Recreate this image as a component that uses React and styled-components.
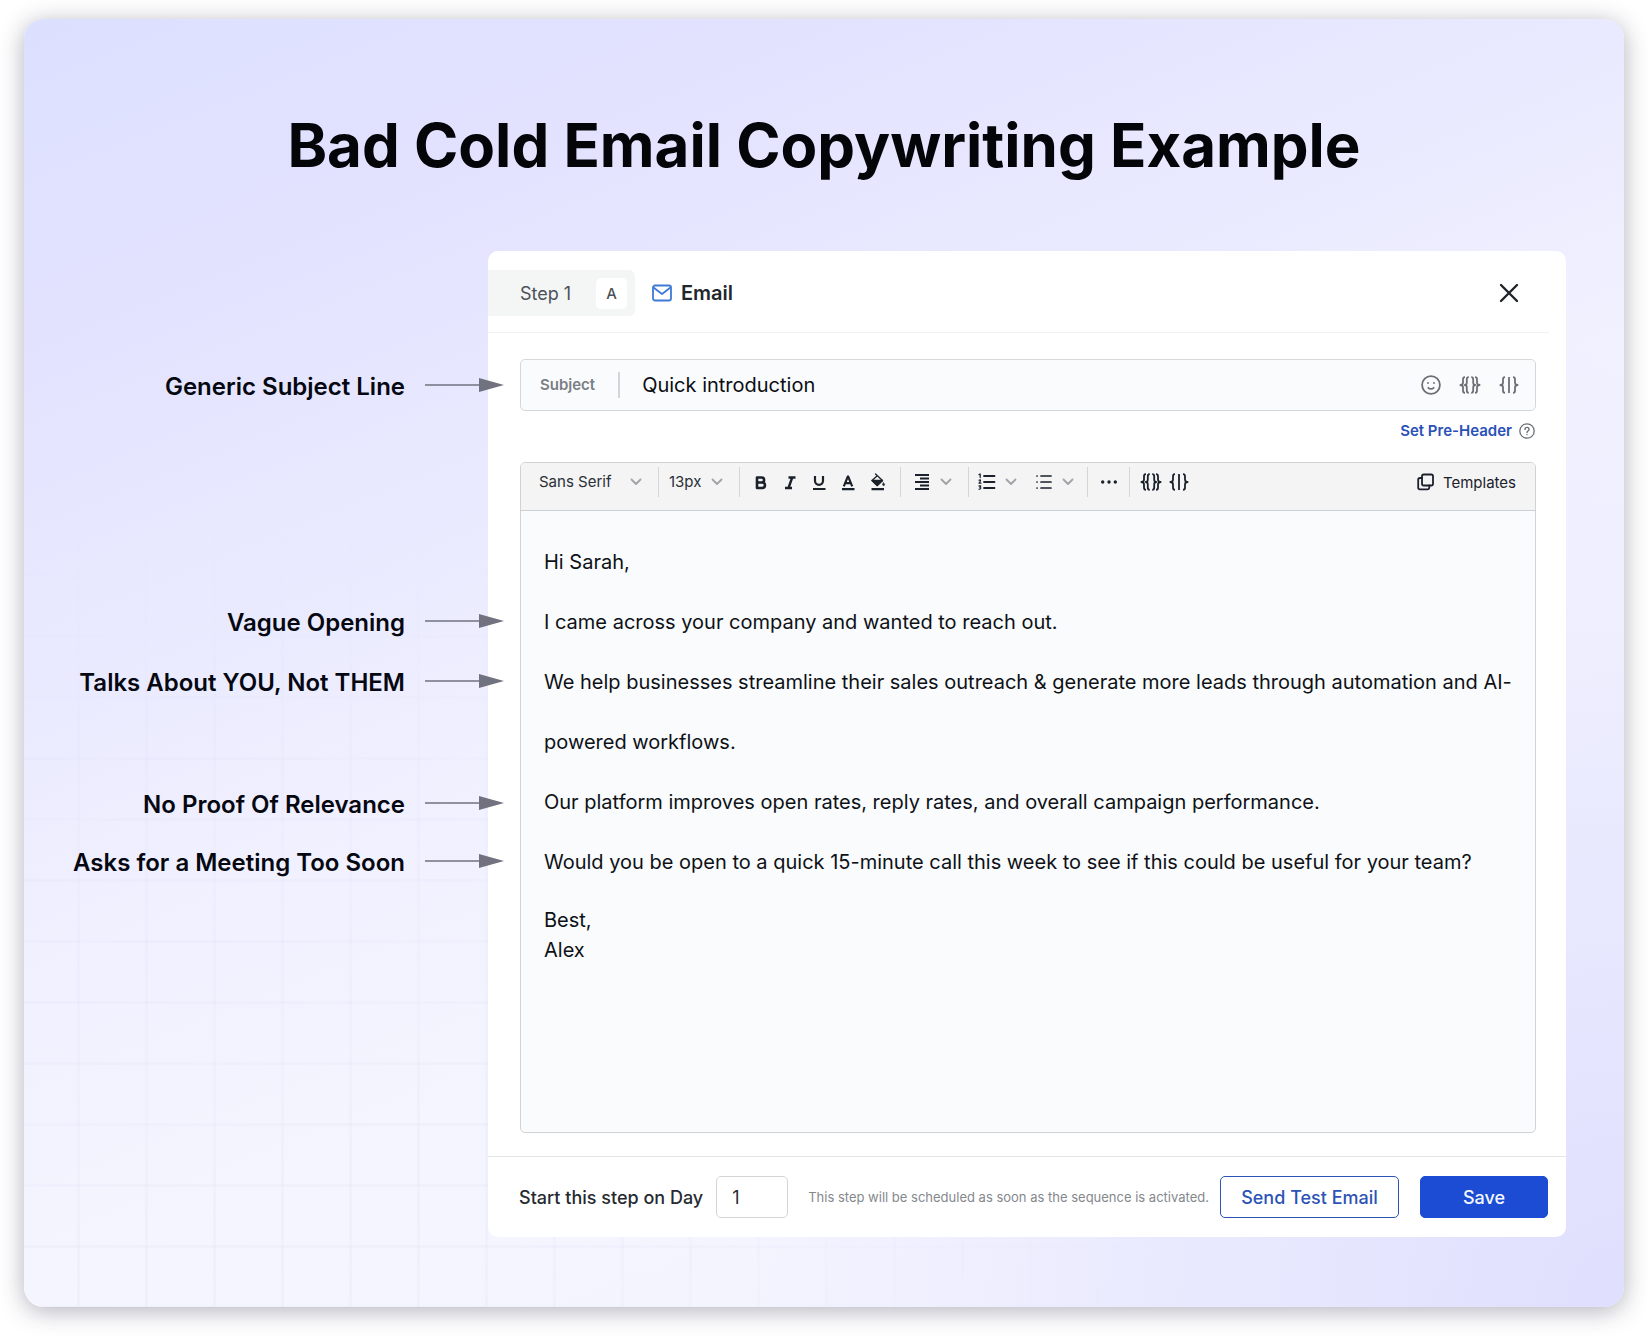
import React from "react";
import styled, { createGlobalStyle, css } from "styled-components";

const GlobalStyle = createGlobalStyle`
  *, *::before, *::after { box-sizing: border-box; }
  body {
    margin: 0;
    background: #ffffff;
    font-family: Inter, "Liberation Sans", sans-serif;
    color: #0b0d12;
  }
  button, input, select { font: inherit; color: inherit; }
  h1, h2, p, ul { margin: 0; padding: 0; }
  svg { display: block; flex: none; }
`;

const Page = styled.main`
  padding: 19px 24px 29px;
`;

const Poster = styled.section`
  position: relative;
  isolation: isolate;
  padding: 90px 58px 70px 0;
  border-radius: 20px;
  background:
    radial-gradient(ellipse 55% 75% at 100% 100%, #dfdffe 0%, rgba(223, 223, 254, 0) 100%),
    linear-gradient(158deg, #dce0ff 0%, #e2e2ff 16%, #e9e9ff 33%, #f0f0ff 48%, #f5f5ff 66%, #f3f3ff 100%);
  box-shadow: 0 4px 24px rgba(40, 40, 70, 0.36);

  &::before {
    content: "";
    position: absolute;
    inset: 0;
    z-index: -1;
    border-radius: inherit;
    background:
      linear-gradient(90deg, rgba(200, 200, 232, 0.09) 3px, transparent 3px) 53px 6px / 68px 61px,
      linear-gradient(rgba(200, 200, 232, 0.09) 3px, transparent 3px) 53px 6px / 68px 61px;
    mask-image: radial-gradient(ellipse 60% 50% at 12% 88%, #000 30%, transparent 100%);
  }
`;

const Title = styled.h1`
  padding-left: 58px;
  margin-bottom: 70px;
  font-size: 60px;
  line-height: 72px;
  font-weight: 700;
  text-align: center;
  color: #030508;
`;

const Board = styled.div`
  display: grid;
  grid-template-columns: 464px minmax(0, 1fr);
  align-items: start;
`;

const Notes = styled.ul`
  position: relative;
  z-index: 1;
  margin-right: -16px;
  padding-top: 121px;
  list-style: none;
`;

const Note = styled.li`
  display: flex;
  justify-content: flex-end;
  align-items: center;
  gap: 20px;
  height: 30px;
  margin-top: ${(p) => p.$gap}px;
  font-size: 24px;
  line-height: 30px;
  font-weight: 600;
  white-space: nowrap;
  color: #060811;
`;

const Panel = styled.section`
  overflow: hidden;
  border-radius: 10px;
  background: #ffffff;
`;

const PanelHeader = styled.header`
  display: flex;
  align-items: center;
  height: 82px;
  margin-right: 17px;
  padding: 3px 30px 0 0;
  border-bottom: 1px solid #f0f1f2;
`;

const StepTab = styled.div`
  display: flex;
  align-items: center;
  justify-content: space-between;
  width: 147px;
  height: 46px;
  padding: 0 8px 0 32px;
  border-radius: 0 6px 6px 0;
  background: #f4f5f5;
  font-size: 18px;
  color: #4b5158;
`;

const Variant = styled.span`
  display: grid;
  place-items: center;
  width: 31px;
  height: 31px;
  border-radius: 5px;
  background: #ffffff;
  font-size: 15px;
  font-weight: 500;
`;

const Heading = styled.h2`
  display: flex;
  align-items: center;
  gap: 9px;
  margin-left: 17px;
  font-size: 20px;
  line-height: 24px;
  font-weight: 600;
  color: #22262d;
`;

const MailGlyph = styled.span`
  color: #3f7bd6;
`;

const IconButton = styled.button`
  display: flex;
  align-items: center;
  gap: 9px;
  padding: 0;
  border: 0;
  background: none;
  color: inherit;
  cursor: pointer;
`;

const CloseButton = styled(IconButton)`
  margin-left: auto;
  color: #1f2328;
`;

const PanelBody = styled.div`
  padding: 26px 30px 23px 32px;
`;

const SubjectBox = styled.div`
  display: flex;
  align-items: center;
  height: 52px;
  padding: 0 16px 0 19px;
  border: 1px solid #d5d8da;
  border-radius: 5px;
  background: #f9fbfc;
`;

const SubjectLabel = styled.label`
  padding-right: 23px;
  border-right: 2px solid #d3d6d8;
  font-size: 15px;
  line-height: 26px;
  font-weight: 600;
  color: #7a7f85;
`;

const SubjectInput = styled.input`
  flex: 1;
  min-width: 0;
  padding: 0 22px;
  border: 0;
  outline: 0;
  background: none;
  font-size: 20px;
  line-height: 26px;
  color: #0b0d12;
`;

const SubjectTools = styled.div`
  display: flex;
  align-items: center;
  gap: 18px;
  color: #6c7075;
`;

const PreHeader = styled.div`
  display: flex;
  justify-content: flex-end;
  align-items: center;
  gap: 7px;
  padding: 8px 1px 19px 0;
  color: #6c7075;
`;

const PreHeaderLink = styled.a`
  font-size: 15px;
  line-height: 24px;
  font-weight: 600;
  text-decoration: none;
  color: #2a51b8;
`;

const Editor = styled.div`
  border: 1px solid #d0d3d6;
  border-radius: 5px;
  background: #f9fbfd;
  overflow: hidden;
`;

const Toolbar = styled.div`
  display: flex;
  align-items: flex-start;
  padding: 4px 0 13px;
  border-bottom: 1px solid #cdd0d2;
  background: #f4f4f4;
  color: #1b212b;
`;

const Group = styled.div`
  display: flex;
  align-items: center;
  gap: ${(p) => p.$gap || 0}px;
  height: 30px;
  padding: 0 ${(p) => p.$right}px 0 ${(p) => p.$left}px;
  ${(p) =>
    p.$divided &&
    css`
      border-left: 1px solid #d3d5d7;
    `}
`;

const Picker = styled.label`
  display: grid;
  align-items: center;
  width: ${(p) => p.$width}px;
  color: #a0a3a7;

  > * { grid-area: 1 / 1; }
  > svg { justify-self: end; pointer-events: none; }
`;

const Select = styled.select`
  width: 100%;
  height: 24px;
  padding: 0;
  border: 0;
  outline: 0;
  appearance: none;
  background: none;
  font-size: 15px;
  line-height: 24px;
  color: #2a2f37;
`;

const Templates = styled(IconButton)`
  height: 30px;
  margin-left: auto;
  margin-right: 19px;
  font-size: 15px;
`;

const Message = styled.div`
  min-height: 621px;
  padding: 21px 23px;
  outline: 0;
  font-size: 20px;
  line-height: 60px;
  color: #0e1116;
`;

const Signature = styled.p`
  padding-top: 13px;
  line-height: 30px;
`;

const Footer = styled.footer`
  display: flex;
  align-items: center;
  padding: 19px 18px 19px 31px;
  border-top: 1px solid #e2e4e6;
`;

const DayLabel = styled.label`
  font-size: 18px;
  font-weight: 500;
  white-space: nowrap;
  color: #262a30;
`;

const DayInput = styled.input`
  width: 72px;
  height: 42px;
  margin: 0 20px 0 13px;
  padding: 0 15px;
  border: 1px solid #d3d5d8;
  border-radius: 5px;
  outline: 0;
  background: #ffffff;
  font-size: 18px;
  color: #262a30;
`;

const Hint = styled.p`
  font-size: 13px;
  line-height: 20px;
  color: #84888d;
`;

const Actions = styled.div`
  display: flex;
  gap: 21px;
  margin-left: auto;
`;

const ActionButton = styled.button`
  width: ${(p) => (p.$primary ? 128 : 179)}px;
  height: 42px;
  padding: 0;
  border: 1px solid ${(p) => (p.$primary ? "#1b4cd3" : "#2c53b5")};
  border-radius: 5px;
  background: ${(p) => (p.$primary ? "#1b4cd3" : "#ffffff")};
  font-size: 18px;
  font-weight: 500;
  white-space: nowrap;
  color: ${(p) => (p.$primary ? "#f4f7ff" : "#2c53b5")};
  cursor: pointer;
`;

function Icon({ w = 18, h = 18, stroke = 2, children }) {
  return (
    <svg
      width={w}
      height={h}
      viewBox={`0 0 ${w} ${h}`}
      fill="none"
      stroke="currentColor"
      strokeWidth={stroke}
      strokeLinecap="round"
      strokeLinejoin="round"
      aria-hidden="true"
    >
      {children}
    </svg>
  );
}

const Arrow = () => (
  <svg width="79" height="18" viewBox="0 0 79 18" aria-hidden="true">
    <path d="M0 7h56" stroke="#70727f" strokeWidth="1.3" />
    <path d="M54 0l25 7-25 7z" fill="#70727f" />
  </svg>
);

const Chevron = () => (
  <Icon w={12} h={8} stroke={1.8}>
    <path d="M1.500 1.500L6 6l4.500-4.500" stroke="#a0a3a7" />
  </Icon>
);

const MailIcon = () => (
  <Icon w={20} h={18} stroke={1.8}>
    <rect x="1" y="1.500" width="18" height="15" rx="2" />
    <path d="M1.500 3.500L10 10l8.500-6.500" />
  </Icon>
);

const CloseIcon = () => (
  <Icon w={20} h={20} stroke={2.4}>
    <path d="M2 2l16 16M18 2L2 18" />
  </Icon>
);

const SmileIcon = () => (
  <Icon w={20} h={20} stroke={1.8}>
    <circle cx="10" cy="10" r="8.900" />
    <path d="M7.300 12.800c1.400 1.300 4 1.300 5.400 0" />
    <path d="M7 7.900v.1M13 7.900v.1" strokeWidth="1.900" />
  </Icon>
);

const HelpIcon = () => (
  <Icon w={16} h={16} stroke={1.3}>
    <circle cx="8" cy="8" r="7.200" />
    <path d="M6 6.400c.1-2.700 4-2.600 4 0 0 1.500-2 1.600-2 3M8 11.500v.1" strokeWidth="1.400" />
  </Icon>
);

const VariableIcon = () => (
  <Icon w={22} h={18} stroke={1.8}>
    <g strokeLinecap="butt">
      <path d="M6 1.200C4.200 1.200 4 2 4 3.500v3C4 8 3.200 9 1.400 9 3.200 9 4 10 4 11.500v3c0 1.500.2 2.300 2 2.300" />
      <path d="M9.800 1.200C8 1.200 7.800 2 7.800 3.500v3C7.800 8 7.200 9 5.800 9c1.400 0 2 1 2 2.500v3c0 1.500.2 2.300 2 2.300" />
      <path d="M12.200 1.200c1.800 0 2 .8 2 2.300v3c0 1.500.6 2.500 2 2.500-1.400 0-2 1-2 2.500v3c0 1.500-.2 2.300-2 2.300" />
      <path d="M16 1.200c1.800 0 2 .8 2 2.300v3c0 1.500.8 2.500 2.600 2.500-1.800 0-2.600 1-2.600 2.500v3c0 1.500-.2 2.300-2 2.300" />
    </g>
  </Icon>
);

const SpintaxIcon = () => (
  <Icon w={20} h={18} stroke={1.8}>
    <g strokeLinecap="butt">
      <path d="M6 1.200C4.200 1.200 4 2 4 3.500v3C4 8 3.200 9 1.400 9 3.200 9 4 10 4 11.500v3c0 1.500.2 2.300 2 2.300" />
      <path d="M10 1v16" />
      <path d="M14 1.200c1.800 0 2 .8 2 2.300v3c0 1.500.8 2.500 2.600 2.500-1.800 0-2.600 1-2.600 2.500v3c0 1.500-.2 2.300-2 2.300" />
    </g>
  </Icon>
);

const BoldIcon = () => (
  <Icon stroke={2.6}>
    <path d="M5 4.500v10.500M5 4.500h4.600a2.500 2.500 0 0 1 0 5H5M5 9.500h5.200a2.750 2.750 0 0 1 0 5.500H5" strokeLinejoin="miter" />
  </Icon>
);

const ItalicIcon = () => (
  <Icon stroke={2.4}>
    <path d="M7.500 4.500H14.500M4 15h7M11.200 4.500L7.500 15" strokeLinecap="butt" />
  </Icon>
);

const UnderlineIcon = () => (
  <Icon stroke={2.2}>
    <path d="M5 3v4.800a4 4 0 0 0 8 0V3" strokeLinecap="butt" />
    <path d="M3 16h12.500" strokeLinecap="butt" />
  </Icon>
);

const TextColorIcon = () => (
  <Icon stroke={2.2}>
    <path d="M4.800 13.400l4-9.700h.4l4 9.700M6.500 10.200h5" strokeLinecap="butt" strokeLinejoin="miter" />
    <path d="M3 16.200h12.500" strokeLinecap="butt" />
  </Icon>
);

const FillIcon = () => (
  <Icon stroke={1.3}>
    <path d="M7.500 1l7 6.500L9.200 12.600 4 7.500l5-4.600" />
    <path d="M4 7.500h10.500L9.200 12.600z" fill="currentColor" />
    <path d="M15.600 9.800l1 1.800a1 1 0 0 1-2 0z" fill="currentColor" strokeWidth=".6" />
    <path d="M3.500 16.200H16" strokeWidth="2.200" strokeLinecap="butt" />
  </Icon>
);

const AlignIcon = () => (
  <Icon stroke={1.8}>
    <path d="M2 2h14M7 5.500h9M2 9h14M7 12.500h9M2 16h14" strokeLinecap="butt" />
  </Icon>
);

const OrderedIcon = () => (
  <Icon stroke={1.8}>
    <path d="M6 3h10.500M6 9h10.500M6 15h10.500" />
    <path d="M1 1.600l1.200-.6V4.600M1 7.200c2-.8 2 .4 0 3h2M1 12.900h1.800l-1 1.400c1.600.2 1.200 2.200-.8 1.800" strokeWidth="1.200" />
  </Icon>
);

const BulletIcon = () => (
  <Icon stroke={1.7}>
    <path d="M6 3h10M6 9h10M6 15h10" />
    <path d="M2 3h.1M2 9h.1M2 15h.1" />
  </Icon>
);

const MoreIcon = () => (
  <Icon stroke={3.4}>
    <path d="M2.700 9h.01M9 9h.01M15.300 9h.01" />
  </Icon>
);

const TemplatesIcon = () => (
  <Icon w={17} h={18} stroke={1.8}>
    <rect x="5" y="1.500" width="11" height="11" rx="1.800" />
    <path d="M5 5H3a1.800 1.800 0 0 0-1.800 1.800V14.500A1.800 1.800 0 0 0 3 16.300h7.500a1.800 1.800 0 0 0 1.800-1.800v-2" />
  </Icon>
);

const notes = [
  { text: "Generic Subject Line", gap: 0 },
  { text: "Vague Opening", gap: 206 },
  { text: "Talks About YOU, Not THEM", gap: 30 },
  { text: "No Proof Of Relevance", gap: 92 },
  { text: "Asks for a Meeting Too Soon", gap: 28 },
];

const formats = [
  ["Bold", BoldIcon],
  ["Italic", ItalicIcon],
  ["Underline", UnderlineIcon],
  ["Text colour", TextColorIcon],
  ["Fill colour", FillIcon],
];

function EditorToolbar() {
  return (
    <Toolbar role="toolbar" aria-label="Formatting">
      <Group $left={18} $right={16}>
        <Picker $width={103}>
          <Select aria-label="Font family" defaultValue="Sans Serif">
            <option>Sans Serif</option>
          </Select>
          <Chevron />
        </Picker>
      </Group>
      <Group $divided $left={10} $right={16}>
        <Picker $width={54}>
          <Select aria-label="Font size" defaultValue="13px">
            <option>13px</option>
          </Select>
          <Chevron />
        </Picker>
      </Group>
      <Group $divided $left={12} $right={14} $gap={11}>
        {formats.map(([name, Glyph]) => (
          <IconButton key={name} type="button" aria-label={name}>
            <Glyph />
          </IconButton>
        ))}
      </Group>
      <Group $divided $left={12} $right={16}>
        <IconButton type="button" aria-label="Alignment">
          <AlignIcon />
          <Chevron />
        </IconButton>
      </Group>
      <Group $divided $left={9} $right={13} $gap={18}>
        <IconButton type="button" aria-label="Numbered list">
          <OrderedIcon />
          <Chevron />
        </IconButton>
        <IconButton type="button" aria-label="Bulleted list">
          <BulletIcon />
          <Chevron />
        </IconButton>
      </Group>
      <Group $divided $left={12} $right={11}>
        <IconButton type="button" aria-label="More options">
          <MoreIcon />
        </IconButton>
      </Group>
      <Group $divided $left={10} $right={10} $gap={7}>
        <IconButton type="button" aria-label="Insert variable">
          <VariableIcon />
        </IconButton>
        <IconButton type="button" aria-label="Insert spintax">
          <SpintaxIcon />
        </IconButton>
      </Group>
      <Templates type="button">
        <TemplatesIcon />
        Templates
      </Templates>
    </Toolbar>
  );
}

export default function App() {
  return (
    <>
      <GlobalStyle />
      <Page>
        <Poster>
          <Title>Bad Cold Email Copywriting Example</Title>
          <Board>
            <Notes>
              {notes.map((note) => (
                <Note key={note.text} $gap={note.gap}>
                  {note.text}
                  <Arrow />
                </Note>
              ))}
            </Notes>
            <Panel>
              <PanelHeader>
                <StepTab>
                  Step 1<Variant>A</Variant>
                </StepTab>
                <Heading>
                  <MailGlyph>
                    <MailIcon />
                  </MailGlyph>
                  Email
                </Heading>
                <CloseButton type="button" aria-label="Close">
                  <CloseIcon />
                </CloseButton>
              </PanelHeader>
              <PanelBody>
                <SubjectBox>
                  <SubjectLabel htmlFor="subject">Subject</SubjectLabel>
                  <SubjectInput id="subject" defaultValue="Quick introduction" />
                  <SubjectTools>
                    <IconButton type="button" aria-label="Insert emoji">
                      <SmileIcon />
                    </IconButton>
                    <IconButton type="button" aria-label="Insert variable in subject">
                      <VariableIcon />
                    </IconButton>
                    <IconButton type="button" aria-label="Insert spintax in subject">
                      <SpintaxIcon />
                    </IconButton>
                  </SubjectTools>
                </SubjectBox>
                <PreHeader>
                  <PreHeaderLink href="#pre-header">Set Pre-Header</PreHeaderLink>
                  <HelpIcon />
                </PreHeader>
                <Editor>
                  <EditorToolbar />
                  <Message
                    role="textbox"
                    aria-multiline="true"
                    aria-label="Email body"
                    contentEditable
                    suppressContentEditableWarning
                    spellCheck={false}
                  >
                    <p>Hi Sarah,</p>
                    <p>I came across your company and wanted to reach out.</p>
                    <p>
                      We help businesses streamline their sales outreach &amp; generate more leads
                      through automation and AI-powered workflows.
                    </p>
                    <p>
                      Our platform improves open rates, reply rates, and overall campaign
                      performance.
                    </p>
                    <p>
                      Would you be open to a quick 15-minute call this week to see if this could be
                      useful for your team?
                    </p>
                    <Signature>
                      Best,
                      <br />
                      Alex
                    </Signature>
                  </Message>
                </Editor>
              </PanelBody>
              <Footer>
                <DayLabel htmlFor="day">Start this step on Day</DayLabel>
                <DayInput id="day" defaultValue="1" inputMode="numeric" />
                <Hint>This step will be scheduled as soon as the sequence is activated.</Hint>
                <Actions>
                  <ActionButton type="button">Send Test Email</ActionButton>
                  <ActionButton type="button" $primary>
                    Save
                  </ActionButton>
                </Actions>
              </Footer>
            </Panel>
          </Board>
        </Poster>
      </Page>
    </>
  );
}
